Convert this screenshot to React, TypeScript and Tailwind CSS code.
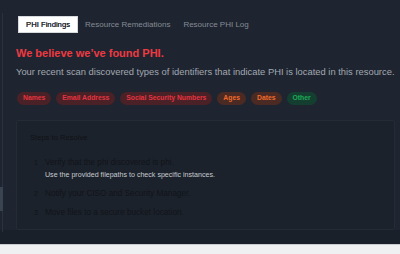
import React from "react";

export default function App() {
  const badges = [
    { t: "Names", c: "bg-[#4a2127] text-[#e5343f]" },
    { t: "Email Address", c: "bg-[#4a2127] text-[#e5343f]" },
    { t: "Social Security Numbers", c: "bg-[#4a2127] text-[#e5343f]" },
    { t: "Ages", c: "bg-[#4a2a23] text-[#ee6a2c]" },
    { t: "Dates", c: "bg-[#4a2a23] text-[#ee6a2c]" },
    { t: "Other", c: "bg-[#143f30] text-[#1eab58]" },
  ];
  return (
    <div className="w-[400px] h-[254px] bg-[#eef0f2] overflow-hidden" style={{ fontFamily: "'Liberation Sans', Arial, sans-serif" }}>
      <div className="relative h-[245px] bg-[#1e2530] flex flex-col border-b border-[#c8ccd2]">
        <div className="absolute left-[2px] top-[13px] h-[219px] w-px bg-[#2a323d]" />
        <div className="absolute left-0 top-[187px] h-[24px] w-[3px] bg-[#3a4350]" />
        <div className="pl-[18px] pr-[5px] pt-[16px] flex-1">
          <div className="flex items-center gap-[2px] text-[8px]">
            <div className="bg-white text-[#222831] px-[7px] h-[17px] flex items-center border border-[#d6d9de] text-[7.7px] [text-shadow:0_0_0.3px_#222831]">PHI Findings</div>
            <div className="text-[#858b95] px-[5px]">Resource Remediations</div>
            <div className="text-[#858b95] px-[6px]">Resource PHI Log</div>
          </div>
          <div className="mt-[13px] -ml-[2px] text-[#ef3a42] text-[11px] font-bold leading-[14px]">We believe we’ve found PHI.</div>
          <div className="mt-[6px] -ml-[2px] text-[#a3a8b1] text-[9.4px] leading-[12px] whitespace-nowrap">Your recent scan discovered types of identifiers that indicate PHI is located in this resource.</div>
          <div className="mt-[14px] -ml-[1px] flex gap-[5px] text-[6.8px] font-bold">
            {badges.map((b) => (
              <span key={b.t} className={`${b.c} rounded-full px-[6px] h-[13px] flex items-center`}>{b.t}</span>
            ))}
          </div>
          <div className="mt-[15px] -ml-[2px] h-[110px] bg-[#1c222b] border border-[#242b36] rounded-[2px] pl-[13px] pt-[12px]">
            <div className="text-[#0f1217] text-[7.6px] leading-[10px]">Steps to Resolve</div>
            <div className="mt-[14px] flex flex-col text-[8.2px] text-[#10141a]">
              <div className="flex">
                <span className="w-[15px] pl-[4px] text-[7px] leading-[12px]">1</span>
                <div>
                  <div className="leading-[12px]">Verify that the phi discovered is phi.</div>
                  <div className="text-[7.1px] text-[#c6cad0] leading-[10px] mt-[1px]">Use the provided filepaths to check specific instances.</div>
                </div>
              </div>
              <div className="flex mt-[8px]">
                <span className="w-[15px] pl-[4px] text-[7px] leading-[12px]">2</span>
                <div className="leading-[12px]">Notify your CISO and Security Manager.</div>
              </div>
              <div className="flex mt-[7px]">
                <span className="w-[15px] pl-[4px] text-[7px] leading-[12px]">3</span>
                <div className="leading-[12px]">Move files to a secure bucket location.</div>
              </div>
            </div>
          </div>
        </div>
        <div className="h-[14px] bg-[#1a2029]" />
      </div>
    </div>
  );
}
